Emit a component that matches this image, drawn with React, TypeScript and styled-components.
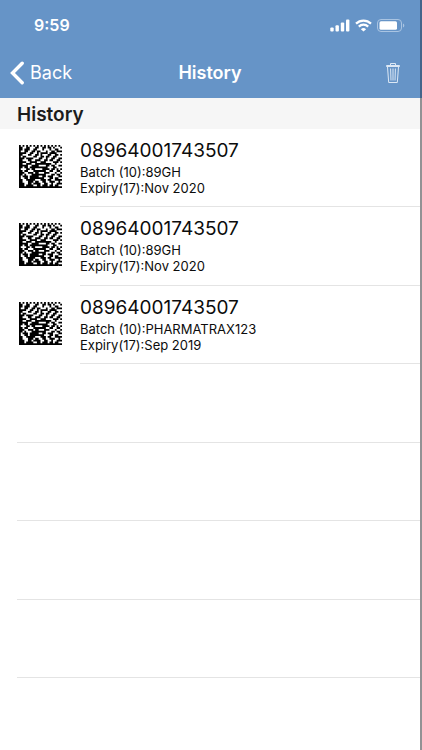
import React from "react";
import styled, { createGlobalStyle } from "styled-components";

const GlobalStyle = createGlobalStyle`
  * { box-sizing: border-box; }
  html, body, #root { height: 100%; }
  body {
    margin: 0;
    background: #fff;
    color: #0c0c0c;
    font-family: Inter, "Liberation Sans", sans-serif;
  }
`;

const Screen = styled.div`
  min-height: 100%;
  display: flex;
  flex-direction: column;
  overflow: hidden;
  background: linear-gradient(#929294, #929294) right / 2px 100% no-repeat #fff;
`;

const TopArea = styled.header`
  background: #6694c7;
  border-right: 2px solid #44658b;
  color: #fff;
`;

const StatusBar = styled.div`
  height: 48px;
  padding: 2px 15px 0 34px;
  display: flex;
  align-items: center;
  justify-content: space-between;
`;

const Clock = styled.time`
  font-size: 16px;
  line-height: 20px;
  font-weight: 600;
`;

const StatusIcons = styled.div`
  display: flex;
  align-items: center;
  gap: 5px;
`;

const NavBar = styled.nav`
  height: 50px;
  padding: 0 10px;
  display: grid;
  grid-template-columns: 1fr auto 1fr;
  align-items: center;
`;

const NavButton = styled.button<{ $end?: boolean }>`
  justify-self: ${(p) => (p.$end ? "end" : "start")};
  display: flex;
  align-items: center;
  gap: 5px;
  padding: ${(p) => (p.$end ? "0 10px" : "0")};
  border: 0;
  background: none;
  color: inherit;
  font: 400 18px/24px Inter, sans-serif;
  cursor: pointer;
`;

const Title = styled.h1`
  margin: 0;
  font-size: 18px;
  line-height: 24px;
  font-weight: 600;
`;

const SectionTitle = styled.h2`
  margin: 0 2px 0 0;
  height: 31px;
  padding: 1px 17px 0;
  background: #f6f6f6;
  color: #1c1c1c;
  font-size: 19px;
  line-height: 31px;
  font-weight: 600;
`;

const List = styled.ul`
  margin: 0;
  padding: 0 2px 0 17px;
  height: 549px;
  display: grid;
  grid-auto-rows: 1fr;
  list-style: none;
`;

const Row = styled.li`
  display: flex;
`;

const CodeCell = styled.div`
  width: 63px;
  padding: 16px 0 0 2px;
  flex: none;
`;

const Details = styled.div`
  flex: 1;
  padding-top: 8px;
  border-bottom: 1px solid #e4e4e4;
`;

const Code = styled.div`
  font-size: 19px;
  line-height: 27px;
`;

const Line = styled.div`
  font-size: 13px;
  line-height: 16px;
`;

const EmptyRow = styled.li`
  border-bottom: 1px solid #e4e4e4;
`;

const MODULES = [
  "101010101010101010101010",
  "110011000110011011010001",
  "110111001100010001001100",
  "100110011011000100110111",
  "111100110010111101111000",
  "110001100110100011001101",
  "101100001100110110011000",
  "111011110001100100110011",
  "110001100111001101100110",
  "111100111100111000011101",
  "110011100111111111001000",
  "111110011110000110110011",
  "110110111111111100011000",
  "100011011000011110110101",
  "110110001111111001100110",
  "111001110110001110001001",
  "110100011111111000110110",
  "101110111110011011100011",
  "100110111111110001101100",
  "110011111000111011001111",
  "110001110110011001110010",
  "111001101111001100100111",
  "111011110011011101101100",
  "111111111111111111111111",
];

const modulePath = MODULES.map((row, y) =>
  [...row].map((m, x) => (m === "1" ? `M${x} ${y}h1v1h-1z` : "")).join("")
).join("");

const DataMatrix = () => (
  <svg width="43" height="43" viewBox="0 0 24 24" role="img" aria-label="Data Matrix code">
    <path d={modulePath} fill="#000" />
  </svg>
);

const Signal = () => (
  <svg width="20" height="13" viewBox="0 0 20 13" fill="#fff" aria-hidden="true">
    <rect x="0.300" y="8.500" width="3.400" height="4" rx="1" />
    <rect x="5.500" y="6.300" width="3.400" height="6.200" rx="1" />
    <rect x="10.800" y="3.500" width="3.400" height="9" rx="1" />
    <rect x="16" y="0.500" width="3.400" height="12" rx="1" />
  </svg>
);

const Wifi = () => (
  <svg width="17" height="13" viewBox="0 0 17 13" fill="none" stroke="#fff" strokeWidth="2.200" aria-hidden="true">
    <path d="M1 4.600a10.800 10.800 0 0 1 15 0" />
    <path d="M3.800 7.600a6.800 6.800 0 0 1 9.400 0" />
    <path d="M8.500 12.600L5.900 10.200a3.800 3.800 0 0 1 5.200 0z" fill="#fff" stroke="none" />
  </svg>
);

const Battery = () => (
  <svg width="28" height="13" viewBox="0 0 28 13" aria-hidden="true">
    <rect x="0.500" y="0.500" width="24" height="12" rx="3.500" fill="none" stroke="#a9c4e2" />
    <rect x="2.500" y="2.300" width="17.500" height="8.400" rx="1.500" fill="#fff" />
    <path d="M26 4.500c1.800.6 1.800 3.400 0 4z" fill="#a9c4e2" />
  </svg>
);

const Chevron = () => (
  <svg width="15" height="24" viewBox="0 0 15 24" fill="none" stroke="#fff" strokeWidth="3.400" strokeLinecap="round" aria-hidden="true">
    <path d="M12.200 2.200L2.500 12l9.700 9.800" />
  </svg>
);

const Trash = () => (
  <svg width="14" height="20" viewBox="0 0 14 20" fill="none" stroke="#dce8f5" strokeWidth="1" strokeLinejoin="round" aria-hidden="true">
    <path d="M.5 3.500v-1h13v1z" />
    <path d="M4.500 2.500v-2h5v2" />
    <path d="M1.500 4l1.200 15.500h8.600L12.500 4" />
    <path d="M4.600 5.500l.4 12M7 5.500v12M9.400 5.500l-.4 12" />
  </svg>
);

const records = [
  { code: "08964001743507", batch: "89GH", expiry: "Nov 2020" },
  { code: "08964001743507", batch: "89GH", expiry: "Nov 2020" },
  { code: "08964001743507", batch: "PHARMATRAX123", expiry: "Sep 2019" },
];

export default function App() {
  return (
    <>
      <GlobalStyle />
      <Screen>
        <TopArea>
          <StatusBar>
            <Clock>9:59</Clock>
            <StatusIcons>
              <Signal />
              <Wifi />
              <Battery />
            </StatusIcons>
          </StatusBar>
          <NavBar>
            <NavButton type="button">
              <Chevron />
              Back
            </NavButton>
            <Title>History</Title>
            <NavButton type="button" $end aria-label="Delete history">
              <Trash />
            </NavButton>
          </NavBar>
        </TopArea>
        <main>
          <SectionTitle>History</SectionTitle>
          <List>
            {records.map((r, i) => (
              <Row key={i}>
                <CodeCell>
                  <DataMatrix />
                </CodeCell>
                <Details>
                  <Code>{r.code}</Code>
                  <Line>Batch (10):{r.batch}</Line>
                  <Line>Expiry(17):{r.expiry}</Line>
                </Details>
              </Row>
            ))}
            {[0, 1, 2, 3].map((i) => (
              <EmptyRow key={i} aria-hidden="true" />
            ))}
          </List>
        </main>
      </Screen>
    </>
  );
}
